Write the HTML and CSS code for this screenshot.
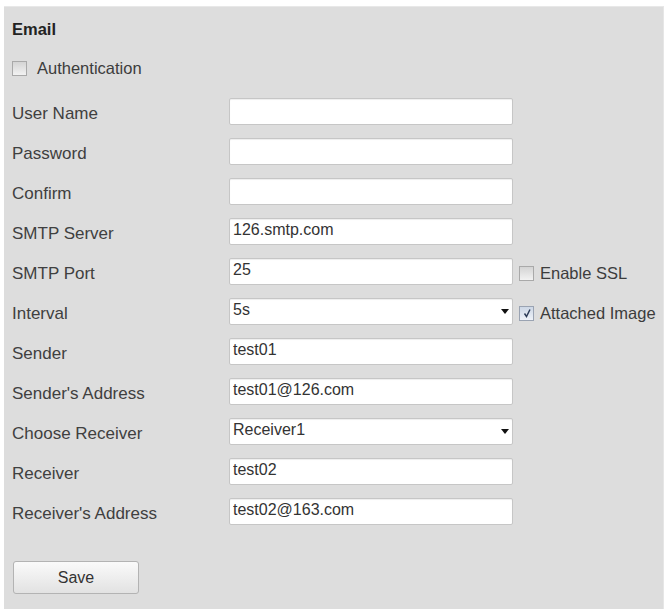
FILE: index.html
```html
<!DOCTYPE html>
<html lang="en">
<head>
  <meta charset="UTF-8">
  <title>Email</title>
  <link rel="stylesheet" href="styles.css">
</head>
<body>
  <div class="panel">
    <div class="title">Email</div>

    <label class="option auth">
      <span class="check"></span>
      <span>Authentication</span>
    </label>

    <form class="email-form">
      <div class="label">User Name</div>
      <input class="field" type="text" value="">
      <div></div>

      <div class="label">Password</div>
      <input class="field" type="password" value="">
      <div></div>

      <div class="label">Confirm</div>
      <input class="field" type="password" value="">
      <div></div>

      <div class="label">SMTP Server</div>
      <input class="field" type="text" value="126.smtp.com">
      <div></div>

      <div class="label">SMTP Port</div>
      <input class="field" type="text" value="25">
      <label class="option">
        <span class="check"></span>
        <span>Enable SSL</span>
      </label>

      <div class="label">Interval</div>
      <div class="field select">
        <span>5s</span>
        <svg class="arrow" width="8" height="5" viewBox="0 0 8 5"><path d="M0 0h8L4 5z" fill="#111"/></svg>
      </div>
      <label class="option">
        <span class="check checked">
          <svg width="12" height="12" viewBox="0 0 12 12"><path d="M3.5 6.5l2 3 3.5-7" fill="none" stroke="#2b3a55" stroke-width="1.4"/></svg>
        </span>
        <span>Attached Image</span>
      </label>

      <div class="label">Sender</div>
      <input class="field" type="text" value="test01">
      <div></div>

      <div class="label">Sender's Address</div>
      <input class="field" type="text" value="test01@126.com">
      <div></div>

      <div class="label">Choose Receiver</div>
      <div class="field select">
        <span>Receiver1</span>
        <svg class="arrow" width="8" height="5" viewBox="0 0 8 5"><path d="M0 0h8L4 5z" fill="#111"/></svg>
      </div>
      <div></div>

      <div class="label">Receiver</div>
      <input class="field" type="text" value="test02">
      <div></div>

      <div class="label">Receiver's Address</div>
      <input class="field" type="text" value="test02@163.com">
      <div></div>
    </form>

    <button class="save" type="button">Save</button>
  </div>
</body>
</html>
```

FILE: styles.css
```css
body {
  margin: 0;
  background: #ffffff;
  font-family: "Liberation Sans", Arial, sans-serif;
  color: #404040;
}
.panel {
  width: 651px;
  height: 558px;
  margin: 6px 0 0 4px;
  padding: 12px 0 34px 8px;
  background: #dddddd;
  border-top: 1px solid #e8e8e8;
  border-right: 1px solid #e6e6e6;
}
.title {
  font-size: 16.5px;
  font-weight: bold;
  line-height: 20px;
  color: #222;
}
.option {
  display: flex;
  align-items: center;
  gap: 6px;
  font-size: 16.5px;
  line-height: 20px;
  color: #3c3c3c;
  white-space: nowrap;
}
.auth {
  margin-top: 19px;
  gap: 10px;
}
.check {
  display: flex;
  align-items: center;
  justify-content: center;
  flex: none;
  width: 13px;
  height: 13px;
  border: 1px solid #a9a9a9;
  background: linear-gradient(#d4d4d4, #f2f2f2);
}
.check.checked {
  background: linear-gradient(#cdd7e6, #eef2f8);
  border-color: #9aa3b2;
}
.email-form {
  display: grid;
  grid-template-columns: 211px 284px auto;
  grid-auto-rows: 27px;
  row-gap: 13px;
  column-gap: 6px;
  align-items: center;
  margin-top: 20px;
}
.email-form .option {
  margin-top: 3px;
}
.label {
  font-size: 17px;
  padding-top: 5px;
  white-space: nowrap;
}
.field {
  box-sizing: border-box;
  height: 27px;
  margin: 0;
  padding: 0 6px 3px 3px;
  border: 1px solid #c6c6c6;
  border-radius: 2px;
  background: #fff;
  box-shadow: inset 0 1px 1px rgba(0, 0, 0, 0.07);
  font-family: "Liberation Sans", Arial, sans-serif;
  font-size: 16px;
  color: #333;
  outline: none;
}
.select {
  display: flex;
  align-items: center;
  justify-content: space-between;
  padding-left: 3px;
  padding-right: 3px;
}
.arrow {
  margin-top: 3px;
}
.save {
  display: block;
  width: 126px;
  height: 33px;
  margin-top: 36px;
  margin-left: 1px;
  border: 1px solid #b3b3b3;
  border-radius: 3px;
  background: linear-gradient(#fafafa, #e2e2e2);
  font-family: "Liberation Sans", Arial, sans-serif;
  font-size: 16px;
  color: #333;
}
```
